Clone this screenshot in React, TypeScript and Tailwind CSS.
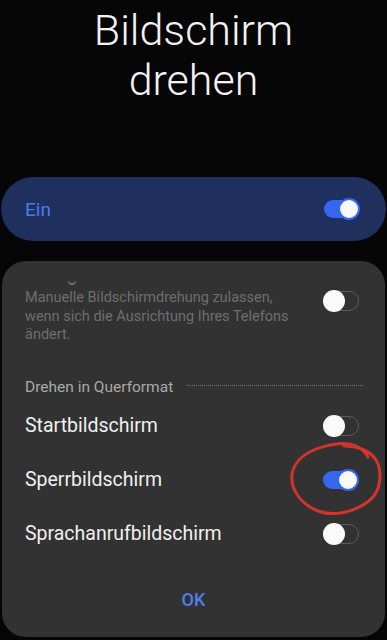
import React from "react";

function Toggle({ on }: { on: boolean }) {
  if (on) {
    return (
      <div className="relative w-[36px] h-[22px] shrink-0">
        <div className="absolute left-0 top-[2px] w-[34px] h-[18px] rounded-full bg-[#3467ee]" />
        <div className="absolute right-0 top-0 w-[22px] h-[22px] rounded-full bg-[#f8f8fa] border-[2px] border-[#3467ee]" />
      </div>
    );
  }
  return (
    <div className="relative w-[36px] h-[22px] shrink-0">
      <div className="absolute right-0 top-[1px] w-[36px] h-[20px] rounded-full border-[1.5px] border-[#5c5c5c]" />
      <div className="absolute left-0 top-0 w-[22px] h-[22px] rounded-full bg-[#fafafa]" />
    </div>
  );
}

function Row({ label, on }: { label: string; on: boolean }) {
  return (
    <div className="h-[54px] flex items-center justify-between pl-[23px] pr-[26px]">
      <span className="text-[19.5px] text-[#efefef]">{label}</span>
      <Toggle on={on} />
    </div>
  );
}

export default function App() {
  return (
    <div
      className="relative w-[387px] h-[640px] overflow-hidden bg-[#060606] flex flex-col"
      style={{ fontFamily: "Roboto, 'Noto Sans', 'Liberation Sans', sans-serif" }}
    >
      <div className="pt-[5px] text-center text-[43px] leading-[50px] font-light text-[#f3f3f3]">
        Bildschirm
        <br />
        drehen
      </div>

      <div className="mt-[72px] mx-[1px] h-[64px] rounded-[32px] bg-[#1f2f5e] flex items-center justify-between pl-[24px] pr-[26px]">
        <span className="text-[19px] text-[#4d7ae9] mt-[2px]">Ein</span>
        <Toggle on={true} />
      </div>

      <div className="mt-[20px] mx-[2px] h-[376px] rounded-[24px] bg-[#323232] flex flex-col pt-[20px]">
        <div className="h-[4px] ml-[66px] w-[8px] rounded-b-full border-b-[2px] border-x-[1px] border-[#9a9a9a] opacity-60" />

        <div className="mt-[4px] flex items-start justify-between pl-[23px] pr-[26px]">
          <div className="text-[14.5px] leading-[18.5px] text-[#6e6e6e]">
            Manuelle Bildschirmdrehung zulassen,
            <br />
            wenn sich die Ausrichtung Ihres Telefons
            <br />
            ändert.
          </div>
          <div className="mt-[1px]">
            <Toggle on={false} />
          </div>
        </div>

        <div className="mt-[33px] h-[18px] flex items-center pl-[23px] pr-[22px] gap-[14px]">
          <span className="text-[15.5px] leading-[18px] text-[#a9a9a9] whitespace-nowrap">
            Drehen in Querformat
          </span>
          <div className="flex-1 border-b-[1.5px] border-dotted border-[#777777] mt-[-2px]" />
        </div>

        <div className="mt-[3px]">
          <Row label="Startbildschirm" on={false} />
          <Row label="Sperrbildschirm" on={true} />
          <Row label="Sprachanrufbildschirm" on={false} />
        </div>

        <div className="flex-1 flex items-center justify-center">
          <span className="text-[18px] font-medium text-[#4f7fe8] mt-[2px]">OK</span>
        </div>
      </div>

      <svg
        className="absolute left-0 top-0 pointer-events-none"
        width="387"
        height="640"
        viewBox="0 0 387 640"
      >
        <path
          d="M368 457 C362 446 350 442 336 444 C316 447 298 455 293 470 C288 487 300 504 318 511 C334 517 356 512 370 500 C382 490 382 470 376 460 C370 450 356 446 344 446"
          fill="none"
          stroke="#d2342c"
          strokeWidth="3"
          strokeLinecap="round"
        />
      </svg>
    </div>
  );
}
